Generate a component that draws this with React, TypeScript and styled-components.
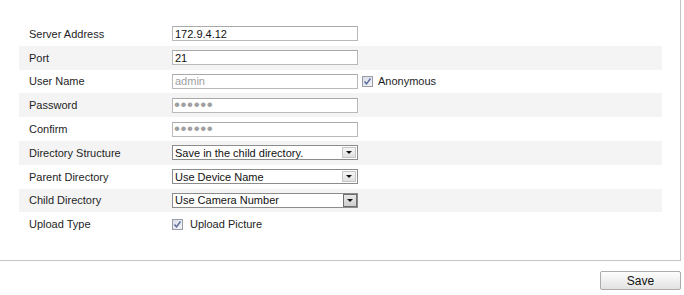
import React from "react";
import styled, { createGlobalStyle } from "styled-components";

const GlobalStyle = createGlobalStyle`
  html, body { margin: 0; padding: 0; background: #ffffff; }
  body {
    font-family: "Liberation Sans", Arial, sans-serif;
    font-size: 11px;
    color: #1e1e1e;
  }
`;

const Page = styled.div`
  width: 684px;
  height: 295px;
  overflow: hidden;
`;

const Panel = styled.div`
  box-sizing: border-box;
  width: 681px;
  height: 261px;
  border-right: 1px solid #c4c4c4;
  border-bottom: 1px solid #c4c4c4;
  padding: 22px 18px 0 19px;
`;

const Form = styled.div`
  display: flex;
  flex-direction: column;
`;

const Row = styled.div<{ $striped?: boolean }>`
  display: flex;
  align-items: center;
  height: 23.8px;
  background: ${(p) => (p.$striped ? "#f4f4f4" : "transparent")};
`;

const Label = styled.div`
  box-sizing: border-box;
  width: 153px;
  padding-left: 10px;
  white-space: nowrap;
`;

const Field = styled.div`
  display: flex;
  align-items: center;
`;

const TextInput = styled.input<{ $muted?: boolean; $dots?: boolean }>`
  box-sizing: border-box;
  width: 186px;
  height: 15px;
  margin: 0;
  padding: 0 ${(p) => (p.$dots ? "1px" : "2px")};
  border: 1px solid #b9b9b9;
  border-top-color: #a9a9a9;
  border-radius: 0;
  background: #ffffff;
  font-family: "Liberation Sans", Arial, sans-serif;
  font-size: ${(p) => (p.$dots ? "17px" : "11px")};
  line-height: 13px;
  letter-spacing: ${(p) => (p.$dots ? "0.6px" : "0")};
  color: ${(p) => (p.$muted ? "#a0a0a0" : "#111111")};
  -webkit-text-fill-color: ${(p) => (p.$muted ? "#a0a0a0" : "#111111")};
  outline: none;
`;

const SelectBox = styled.div`
  box-sizing: border-box;
  width: 186px;
  height: 15px;
  display: flex;
  align-items: stretch;
  border: 1px solid #8c8c8c;
  background: #ffffff;
`;

const SelectText = styled.div`
  flex: 1;
  display: flex;
  align-items: center;
  padding-left: 2px;
  color: #111111;
  white-space: nowrap;
  overflow: hidden;
`;

const ArrowBox = styled.div<{ $active?: boolean }>`
  box-sizing: border-box;
  width: 14px;
  margin: ${(p) => (p.$active ? "0" : "1px")};
  display: flex;
  align-items: center;
  justify-content: center;
  border: 1px solid ${(p) => (p.$active ? "#6e6e6e" : "#c6c6c6")};
  background: ${(p) =>
    p.$active
      ? "linear-gradient(#e8e8e8, #cfcfcf)"
      : "linear-gradient(#f6f6f6, #e0e0e0)"};
`;

const Arrow = styled.span`
  width: 0;
  height: 0;
  border-left: 3px solid transparent;
  border-right: 3px solid transparent;
  border-top: 3px solid #111111;
`;

const CheckWrap = styled.label<{ $gap: number; $offset: number }>`
  display: flex;
  align-items: center;
  gap: ${(p) => p.$gap}px;
  margin-left: ${(p) => p.$offset}px;
  white-space: nowrap;
`;

const CheckSquare = styled.span`
  box-sizing: border-box;
  width: 11px;
  height: 11px;
  display: flex;
  align-items: center;
  justify-content: center;
  border: 1px solid #9a9ba8;
  background: linear-gradient(135deg, #d9dde6, #f4f5f8);
`;

const Footer = styled.div`
  width: 681px;
  display: flex;
  justify-content: flex-end;
  padding-top: 10px;
`;

const SaveButton = styled.button`
  box-sizing: border-box;
  width: 81px;
  height: 19px;
  margin: 0;
  padding: 0;
  border: 1px solid #acacac;
  border-radius: 2px;
  background: linear-gradient(#fefefe, #f0f0f0 50%, #e2e2e2);
  font-family: "Liberation Sans", Arial, sans-serif;
  font-size: 12px;
  color: #111111;
  cursor: pointer;
`;

const Checkbox: React.FC = () => (
  <CheckSquare>
    <svg width="9" height="9" viewBox="0 0 9 9">
      <polyline
        points="1.5,4.5 3.5,6.8 7.5,1.5"
        fill="none"
        stroke="#5a6a9c"
        strokeWidth="1.4"
      />
    </svg>
  </CheckSquare>
);

const Select: React.FC<{ value: string; active?: boolean }> = ({ value, active }) => (
  <SelectBox>
    <SelectText>{value}</SelectText>
    <ArrowBox $active={active}>
      <Arrow />
    </ArrowBox>
  </SelectBox>
);

export default function App() {
  return (
    <>
      <GlobalStyle />
      <Page>
        <Panel>
          <Form>
            <Row>
              <Label>Server Address</Label>
              <Field>
                <TextInput readOnly value="172.9.4.12" />
              </Field>
            </Row>
            <Row $striped>
              <Label>Port</Label>
              <Field>
                <TextInput readOnly value="21" />
              </Field>
            </Row>
            <Row>
              <Label>User Name</Label>
              <Field>
                <TextInput readOnly $muted value="admin" />
                <CheckWrap $gap={5} $offset={4}>
                  <Checkbox />
                  Anonymous
                </CheckWrap>
              </Field>
            </Row>
            <Row $striped>
              <Label>Password</Label>
              <Field>
                <TextInput readOnly $muted $dots value="••••••" />
              </Field>
            </Row>
            <Row>
              <Label>Confirm</Label>
              <Field>
                <TextInput readOnly $muted $dots value="••••••" />
              </Field>
            </Row>
            <Row $striped>
              <Label>Directory Structure</Label>
              <Field>
                <Select value="Save in the child directory." />
              </Field>
            </Row>
            <Row>
              <Label>Parent Directory</Label>
              <Field>
                <Select value="Use Device Name" />
              </Field>
            </Row>
            <Row $striped>
              <Label>Child Directory</Label>
              <Field>
                <Select value="Use Camera Number" active />
              </Field>
            </Row>
            <Row>
              <Label>Upload Type</Label>
              <Field>
                <CheckWrap $gap={7} $offset={0}>
                  <Checkbox />
                  Upload Picture
                </CheckWrap>
              </Field>
            </Row>
          </Form>
        </Panel>
        <Footer>
          <SaveButton>Save</SaveButton>
        </Footer>
      </Page>
    </>
  );
}
